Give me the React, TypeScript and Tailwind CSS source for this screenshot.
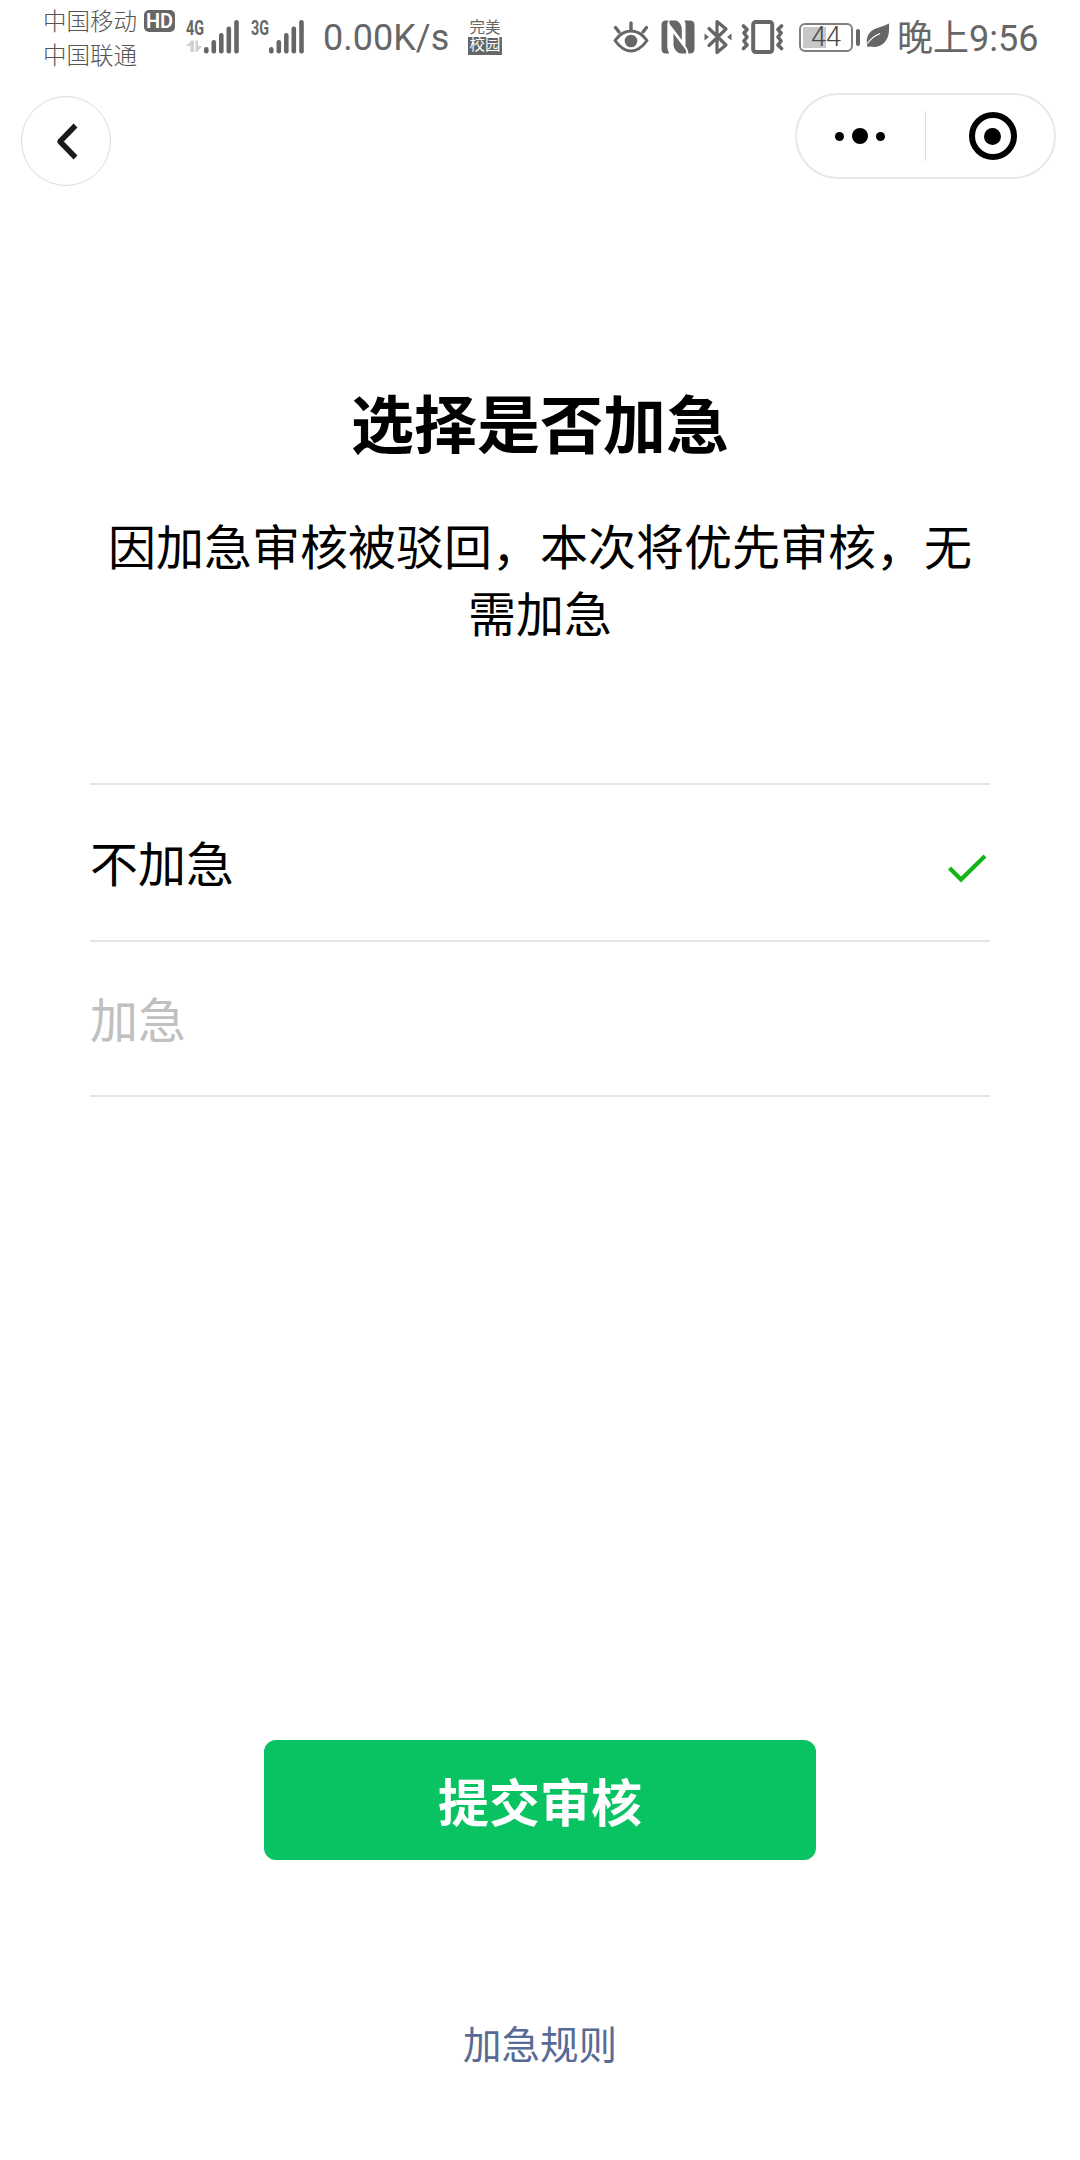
// src/App.tsx
import * as React from 'react';

type Option = { id: string; label: string; disabled?: boolean };

const options: Option[] = [
  { id: 'normal', label: '不加急' },
  { id: 'urgent', label: '加急', disabled: true },
];

function cx(...c: (string | false | undefined)[]) {
  return c.filter(Boolean).join(' ');
}

function Signal({ label, data }: { label: string; data?: boolean }) {
  return (
    <svg width="54" height="36" viewBox="0 0 54 36" fill="#666" className="shrink-0 overflow-visible">
      <text
        x="0"
        y="15.5"
        textLength="18"
        lengthAdjust="spacingAndGlyphs"
        className="font-['Roboto'] text-[20.5px] font-bold"
      >
        {label}
      </text>
      {data && (
        <g fill="#d0d0d0">
          <path d="M0 27 5.500 21.500H8V33H4.500v-6z" />
          <path d="M9.500 21.500H12V27h4l-5 6H9.500z" />
        </g>
      )}
      <rect x="18" y="28" width="4.600" height="6.500" rx="2.200" />
      <rect x="25.500" y="21" width="4.600" height="13.500" rx="2.200" />
      <rect x="33" y="14" width="4.600" height="20.500" rx="2.200" />
      <rect x="40.500" y="7.500" width="4.600" height="27" rx="2.200" />
      <rect x="48.200" y="1" width="4.600" height="33.500" rx="2.200" />
    </svg>
  );
}

function EyeIcon() {
  return (
    <svg width="38" height="36" viewBox="0 0 38 36" fill="none" stroke="#666" className="shrink-0">
      <path d="M3 21.500C8 14.500 13 12 19 12s11 2.500 16 9.500C30 28.500 25 32 19 32S8 28.500 3 21.500z" strokeWidth="3" strokeLinejoin="round" />
      <circle cx="19" cy="22" r="6.300" fill="#666" stroke="none" />
      <path d="M3.500 8.500 7 13M19 4v7M34.500 8.500 31 13" strokeWidth="3.400" strokeLinecap="round" />
    </svg>
  );
}

function NfcIcon() {
  return (
    <svg width="34" height="34" viewBox="0 0 34 34" fill="#666" className="shrink-0">
      <path d="M5 .5h2.500C6.500 2 6.300 4 6.300 6v20c0 3 .7 5 2 7.500H5c-3 0-4.500-1.500-4.500-4.500V5C.5 2 2 .5 5 .5z" />
      <path d="M9 .5h4.500c2 0 3.500.5 5 2.500 1.600 2.200 2.300 4 2.300 6.500v10.500L9 4.500C8 3 8 1.500 9 .5z" />
      <path d="M12.500 13.500 24.500 29.500c.8 1.200 1 2.800.5 4h-4.500c-2.500 0-4.200-1-5.700-3-1.600-2-2.300-3.700-2.300-6.500z" />
      <path d="M24.500.5H29c3 0 4.500 1.500 4.500 4.500v24c0 2.500-1.500 4.500-4.500 4.500h-1.800c.3-1.500-.3-3.500-1.500-5.500L24.500 26V8c0-3 .3-5-1-7.500z" />
    </svg>
  );
}

function BluetoothIcon() {
  return (
    <svg width="28" height="36" viewBox="0 0 28 36" fill="none" stroke="#666" className="shrink-0">
      <path d="m5 9.500 17 16.500-9 7.500V2.500l9 7.500L5 26.500" strokeWidth="3.200" strokeLinejoin="round" strokeLinecap="round" />
      <path d="m.5 14.500 4.500 3.500-4.500 3.500zM27.500 14.500 23 18l4.500 3.500z" fill="#666" stroke="none" />
    </svg>
  );
}

function VibrateIcon() {
  return (
    <svg width="43" height="34" viewBox="0 0 43 34" fill="none" stroke="#666" className="shrink-0">
      <rect x="12.200" y="2" width="19" height="30" rx="2.500" strokeWidth="4" />
      <path
        d="m2.500 6 3.500 3.500-3 3.500 3 4-3 4 3 4-3.500 3.500M40.500 6 37 9.500l3 3.500-3 4 3 4-3 4 3.500 3.500"
        strokeWidth="3.600"
        strokeLinejoin="round"
        strokeLinecap="round"
      />
    </svg>
  );
}

function Battery({ level }: { level: number }) {
  return (
    <div className="flex shrink-0 items-center gap-[3px]">
      <div className="relative flex h-[29px] w-[54px] items-center justify-center rounded-[6px] border-2 border-[#808080]">
        <div className="absolute inset-y-[2px] left-[2px] w-[23px] bg-[#c8c8c8]" />
        <span className="relative text-[27px] leading-none font-light text-[#4a4a4a]">{level}</span>
      </div>
      <div className="h-[17px] w-[4px] rounded-full bg-[#666]" />
    </div>
  );
}

function LeafIcon() {
  return (
    <svg width="24" height="26" viewBox="0 0 24 26" className="shrink-0">
      <path d="M23 .5c.5 9-.5 15-5 19.500-4 4-9.500 4.500-13.500 3.500L1.500 24C.3 18 .5 13.500 4 9.500 8.500 4.500 15.500 4.500 23 .5z" fill="#666" />
      <path d="M1.500 20.500C4 16.500 8 13 14 10.500" stroke="#fff" strokeWidth="1.300" fill="none" />
    </svg>
  );
}

function StatusBar() {
  return (
    <div className="flex h-[74px] items-center pl-[43px] whitespace-nowrap text-[#666]">
      <div className="mt-[3px] flex w-[96px] shrink-0 flex-col text-[23.500px] leading-[34px] font-light text-[#555]">
        <span>中国移动</span>
        <span>中国联通</span>
      </div>
      <div className="mb-[32px] ml-[5px] flex h-[22px] w-[31px] shrink-0 items-center justify-center rounded-[5px] bg-[#666] text-[20px] leading-[22px] font-semibold text-white">
        HD
      </div>
      <div className="ml-[11px]"><Signal label="4G" data /></div>
      <div className="ml-[11px]"><Signal label="3G" /></div>
      <span className="mt-[2px] ml-[18px] w-[126px] text-[36px] leading-none">0.00K/s</span>
      <div className="ml-[19px] flex w-[34px] shrink-0 flex-col text-center text-[15.500px] leading-[17px]">
        <span>完美</span>
        <span className="h-[18px] bg-[#666] text-white">校园</span>
      </div>
      <div className="ml-[110px]"><EyeIcon /></div>
      <div className="ml-[11px]"><NfcIcon /></div>
      <div className="ml-[9px]"><BluetoothIcon /></div>
      <div className="ml-[9px]"><VibrateIcon /></div>
      <div className="ml-[15px]"><Battery level={44} /></div>
      <div className="mb-[3px] ml-[6px]"><LeafIcon /></div>
      <span className="mt-[3px] ml-[7px] text-[36px] leading-none">晚上9:56</span>
    </div>
  );
}

function NavBar() {
  return (
    <div className="flex h-[112px] items-start justify-between pt-[19px] pr-[24px] pl-[21px]">
      <button type="button" aria-label="返回" className="mt-[3px] grid size-[90px] place-items-center rounded-full border border-[#dcdcdc]">
        <svg width="24" height="38" viewBox="0 0 24 38" fill="none" stroke="#1a1a1a" strokeWidth="5.400" strokeLinejoin="round">
          <path d="M21.500 3.500 6 19.500 21.500 35.500" />
        </svg>
      </button>
      <div className="flex h-[86px] w-[261px] items-center rounded-full border-2 border-[#e8e8e8]">
        <button type="button" aria-label="更多" className="flex w-[128px] items-center justify-center gap-[8px] pr-[2px]">
          <span className="size-[9px] rounded-full bg-black" />
          <span className="size-[16px] rounded-full bg-black" />
          <span className="size-[9px] rounded-full bg-black" />
        </button>
        <span className="h-[50px] w-px bg-[#dcdcdc]" />
        <button type="button" aria-label="关闭" className="flex flex-1 items-center justify-center">
          <span className="ml-[5px] grid size-[48px] place-items-center rounded-full border-[6px] border-black">
            <span className="size-[17px] rounded-full bg-black" />
          </span>
        </button>
      </div>
    </div>
  );
}

function CheckMark() {
  return (
    <svg width="40" height="30" viewBox="0 0 40 30" fill="none" stroke="#15b418" strokeWidth="4.200">
      <path d="m2.500 14 11.500 11.500L38 2" />
    </svg>
  );
}

export default function App() {
  const [selected, setSelected] = React.useState('normal');

  return (
    <main className="flex h-[2160px] w-[1080px] flex-col overflow-hidden bg-white font-['Roboto','Noto_Sans_CJK_SC',sans-serif] text-black">
      <StatusBar />
      <NavBar />

      <section className="flex flex-col items-center px-[90px] pt-[190px] text-center font-['Noto_Sans_CJK_SC',sans-serif]">
        <h1 className="text-[63px] leading-[90px] font-bold">选择是否加急</h1>
        <p className="mt-[45px] text-[48px] leading-[67px]">
          因加急审核被驳回，本次将优先审核，无需加急
        </p>
      </section>

      <ul className="mx-[90px] mt-[138px] border-t-2 border-[#e5e5e5] font-['Noto_Sans_CJK_SC',sans-serif]">
        {options.map(({ id, label, disabled }) => (
          <li key={id} className="border-b-2 border-[#e5e5e5]">
            <button
              type="button"
              disabled={disabled}
              onClick={() => setSelected(id)}
              className={cx(
                'flex w-full items-center justify-between pb-[3px] text-[48px] leading-none',
                disabled ? 'h-[153px] text-[#c0c0c0]' : 'h-[155px]'
              )}
            >
              <span>{label}</span>
              {selected === id && <span className="mt-[16px] mr-[3px]"><CheckMark /></span>}
            </button>
          </li>
        ))}
      </ul>

      <footer className="mt-auto flex flex-col items-center pb-[88px] font-['Noto_Sans_CJK_SC',sans-serif]">
        <button type="button" className="h-[120px] w-[552px] rounded-[12px] bg-[#09c362] text-[51px] leading-none font-bold text-white">
          提交审核
        </button>
        <a href="#rules" className="mt-[152px] text-[38.500px] leading-[60px] text-[#576b95]">
          加急规则
        </a>
      </footer>
    </main>
  );
}
